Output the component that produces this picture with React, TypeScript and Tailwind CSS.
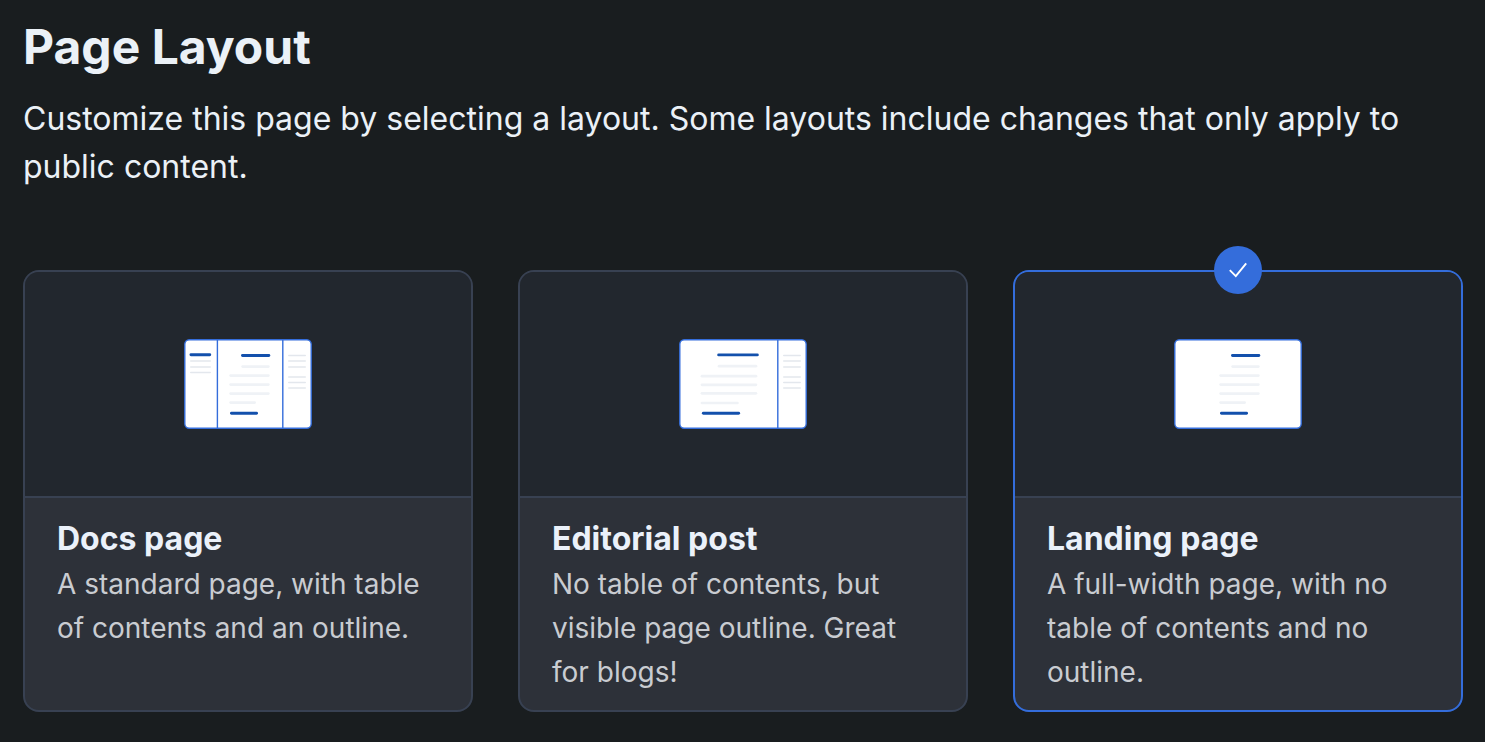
import { useState } from "react";

// [x1, x2, y]
type Line = [number, number, number];

interface Artwork {
  dividers: number[];
  accents: Line[];
  text: Line[];
  side: Line[];
}

interface LayoutOption {
  id: string;
  title: string;
  description: string;
  artwork: Artwork;
}

const outline: Line[] = [
  [104, 122, 16.5],
  [104, 122, 22],
  [104, 122, 28],
  [104, 122, 38],
  [104, 122, 43.5],
  [104, 122, 49],
];

const contents: Line[] = [
  [6, 27, 22],
  [6, 27, 28],
  [6, 27, 33.5],
];

const narrowText: Line[] = [
  [57.3, 85.7, 27.6],
  [45.3, 85.7, 36.6],
  [45.3, 85.7, 45.6],
  [45.3, 85.7, 54.6],
  [45.3, 72, 63.6],
];

const narrowAccents: Line[] = [
  [57, 86.3, 16.5],
  [46, 74, 74.2],
];

const options: LayoutOption[] = [
  {
    id: "docs",
    title: "Docs page",
    description: "A standard page, with table of contents and an outline.",
    artwork: {
      dividers: [33.4, 98.8],
      accents: [[5.5, 27.2, 15.8], ...narrowAccents],
      text: narrowText,
      side: [...contents, ...outline],
    },
  },
  {
    id: "editorial",
    title: "Editorial post",
    description: "No table of contents, but visible page outline. Great for blogs!",
    artwork: {
      dividers: [98.8],
      accents: [
        [38.2, 79.8, 15.9],
        [22.9, 61.1, 74.2],
      ],
      text: [
        [38.7, 78.3, 27.2],
        [21.6, 78.3, 37.2],
        [21.6, 78.3, 45.8],
        [21.6, 78.3, 54.3],
        [21.6, 59.8, 64],
      ],
      side: outline,
    },
  },
  {
    id: "landing",
    title: "Landing page",
    description: "A full-width page, with no table of contents and no outline.",
    artwork: {
      dividers: [],
      accents: narrowAccents,
      text: narrowText,
      side: [],
    },
  },
];

function Bars({ lines, size, color }: { lines: Line[]; size: number; color: string }) {
  return (
    <g fill={color}>
      {lines.map(([x1, x2, y]) => (
        <rect key={`${x1}-${y}`} x={x1} y={y - size / 2} width={x2 - x1} height={size} rx={size / 2} />
      ))}
    </g>
  );
}

function Preview({ artwork }: { artwork: Artwork }) {
  return (
    <svg className="h-[90px] w-32" viewBox="0 0 128 90" aria-hidden="true">
      <rect x="0.8" y="0.8" width="126.4" height="88.4" rx="4.5" fill="#fff" stroke="#346ddb" strokeWidth="1.4" />
      {artwork.dividers.map((x) => (
        <path key={x} d={`M${x} 1V89`} stroke="#346ddb" strokeWidth="1.4" />
      ))}
      <Bars lines={artwork.side} size={1.5} color="#e3e7ed" />
      <Bars lines={artwork.text} size={2.7} color="#eff2f6" />
      <Bars lines={artwork.accents} size={2.9} color="#1350ac" />
    </svg>
  );
}

function LayoutCard({
  option,
  selected,
  onSelect,
}: {
  option: LayoutOption;
  selected: boolean;
  onSelect: () => void;
}) {
  return (
    <label
      className={`relative flex cursor-pointer flex-col rounded-2xl border-2 bg-[#2d3139] ${
        selected ? "border-[#346ddb]" : "border-[#384152]"
      }`}
    >
      <input type="radio" name="layout" value={option.id} checked={selected} onChange={onSelect} className="sr-only" />
      {selected && (
        <span className="absolute -top-[26px] left-1/2 flex size-12 -translate-x-1/2 items-center justify-center rounded-full bg-[#346ddb]">
          <svg className="size-6" viewBox="0 0 24 24" fill="none" stroke="#fff" strokeWidth="1.9" aria-hidden="true">
            <path d="M3.8 12.2L9.8 18.2L20.2 5.3" />
          </svg>
        </span>
      )}
      <span className="flex items-center justify-center rounded-t-[14px] border-b-2 border-[#384152] bg-[#22272e] py-[67px]">
        <Preview artwork={option.artwork} />
      </span>
      <span className="flex flex-col px-8 pt-[18px] pb-4">
        <span className="text-[32px] leading-[46px] font-bold text-[#ebf1fa]">{option.title}</span>
        <span className="text-[28px] leading-[44px] text-[#c9ccd1]">{option.description}</span>
      </span>
    </label>
  );
}

export default function App() {
  const [selected, setSelected] = useState("landing");

  return (
    <main className="min-h-screen bg-[#191d1f] pt-[19px] pr-[22px] pb-5 pl-[23px] font-['Inter',sans-serif] text-[#ebf1f7]">
      <h1 className="text-5xl leading-[56px] font-bold">Page Layout</h1>
      <p className="mt-5 text-[32px] leading-[48px]">
        Customize this page by selecting a layout. Some layouts include changes that only apply to public content.
      </p>
      <div role="radiogroup" aria-label="Page layout" className="mt-[79px] grid grid-cols-3 gap-[45px]">
        {options.map((option) => (
          <LayoutCard
            key={option.id}
            option={option}
            selected={selected === option.id}
            onSelect={() => setSelected(option.id)}
          />
        ))}
      </div>
    </main>
  );
}
